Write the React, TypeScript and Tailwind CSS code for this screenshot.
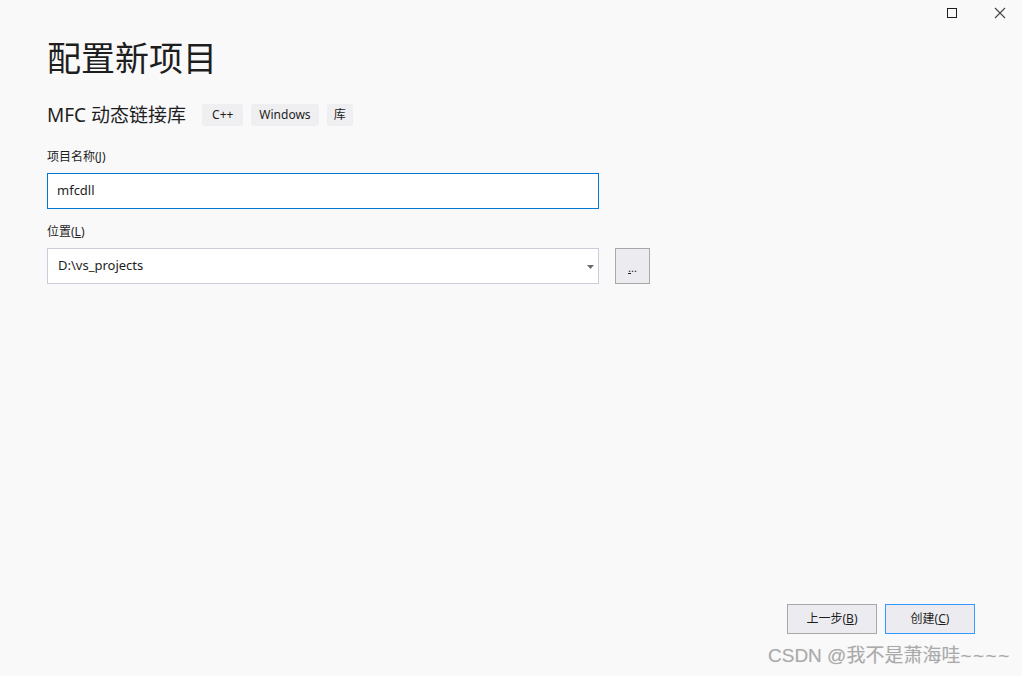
import React from "react";

const font = { fontFamily: '"Noto Sans", "Noto Sans CJK SC", sans-serif' };

export default function App() {
  return (
    <div
      className="relative w-[1022px] h-[676px] bg-[#f9f9fa] text-[#1e1e1e] overflow-hidden flex flex-col"
      style={font}
    >
      {/* window controls */}
      <div className="absolute top-[8px] left-[947px] w-[10px] h-[10px] border border-[#1e1e1e]" />
      <svg className="absolute top-[7px] left-[994px]" width="12" height="12" viewBox="0 0 12 12">
        <path d="M1 1 L11 11 M11 1 L1 11" stroke="#444" strokeWidth="1.1" fill="none" />
      </svg>

      <div className="flex flex-col px-[47px] pt-[38px]">
        <div className="text-[34px] leading-[40px]">配置新项目</div>
        <div className="mt-[26px] flex items-center h-[22px]">
          <span className="text-[19px] leading-[22px]">MFC 动态链接库</span>
          <div className="ml-[16px] flex gap-[8px]">
            <span className="h-[22px] px-[10px] rounded-[3px] bg-[#efeff1] text-[12px] leading-[22px]">C++</span>
            <span className="h-[22px] px-[8px] rounded-[3px] bg-[#efeff1] text-[12px] leading-[22px]">Windows</span>
            <span className="h-[22px] px-[7px] rounded-[3px] bg-[#efeff1] text-[12px] leading-[22px]">库</span>
          </div>
        </div>

        <div className="mt-[22px] text-[12px] leading-[18px]">
          项目名称(<u>J</u>)
        </div>
        <div className="mt-[7px] w-[552px] h-[36px] bg-white border border-[#0078d4] flex items-center pl-[9px] text-[13px]">
          mfcdll
        </div>

        <div className="mt-[14px] text-[12px] leading-[18px]">
          位置(<u>L</u>)
        </div>
        <div className="mt-[7px] flex items-center">
          <div className="relative w-[552px] h-[36px] bg-white border border-[#ccccdc] flex items-center pl-[10px] text-[13px]">
            D:\vs_projects
            <svg className="absolute right-[4px] top-[16px]" width="7" height="4" viewBox="0 0 7 4">
              <path d="M0 0 L7 0 L3.5 4 Z" fill="#6b6b6b" />
            </svg>
          </div>
          <div className="ml-[16px] w-[35px] h-[36px] bg-[#ececf0] border border-[#a8a8a8] flex items-center justify-center text-[11px] leading-none pt-[2px]">
            <span><u>.</u>..</span>
          </div>
        </div>
      </div>

      <div className="mt-auto mb-[42px] flex justify-end gap-[8px] pr-[47px]">
        <div className="w-[90px] h-[30px] bg-[#ececf0] border border-[#a8a8a8] flex items-center justify-center text-[12px]">
          上一步(<u>B</u>)
        </div>
        <div className="w-[90px] h-[30px] bg-[#ececf0] border border-[#3399ff] flex items-center justify-center text-[12px]">
          创建(<u>C</u>)
        </div>
      </div>

      <div
        className="absolute left-[768px] top-[643px] text-[19px] leading-[26px] text-[#aaaaaa] whitespace-nowrap"
        style={{ fontFamily: '"Liberation Sans", "Noto Sans CJK SC", sans-serif', textShadow: "0 0 1px #e0e0e0" }}
      >
        CSDN @我不是萧海哇<span className="tracking-[1.5px]">~~~~</span>
      </div>
    </div>
  );
}
